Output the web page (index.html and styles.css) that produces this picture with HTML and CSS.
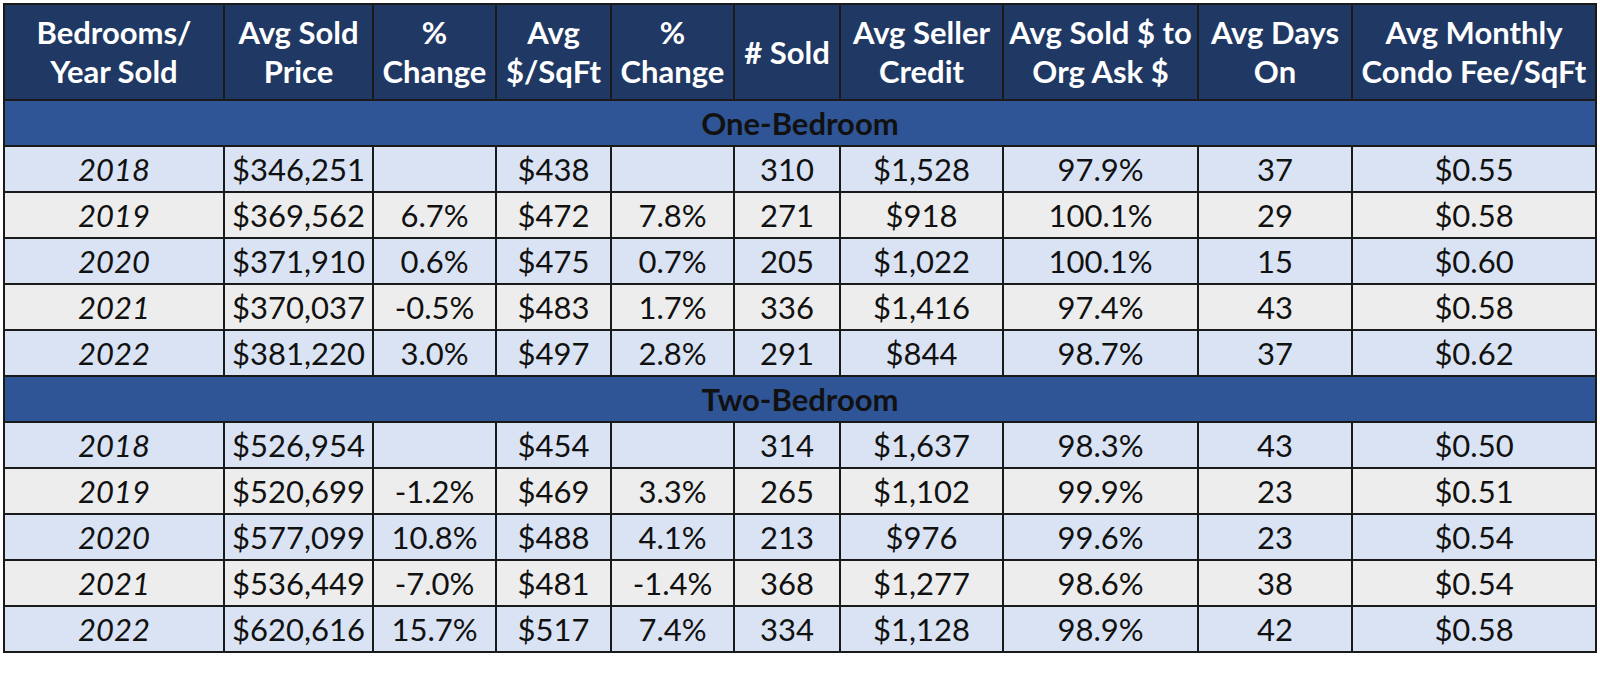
FILE: index.html
```html
<!DOCTYPE html>
<html>
<head>
<meta charset="utf-8">
<link rel="stylesheet" href="styles.css">
</head>
<body>
<table class="stats">
  <colgroup>
    <col class="c1"><col class="c2"><col class="c3"><col class="c4"><col class="c5">
    <col class="c6"><col class="c7"><col class="c8"><col class="c9"><col class="c10">
  </colgroup>
  <thead>
    <tr class="head">
      <th>Bedrooms/<br>Year Sold</th>
      <th>Avg Sold<br>Price</th>
      <th>%<br>Change</th>
      <th>Avg<br>$/SqFt</th>
      <th>%<br>Change</th>
      <th># Sold</th>
      <th>Avg Seller<br>Credit</th>
      <th>Avg Sold $ to<br>Org Ask $</th>
      <th>Avg Days<br>On</th>
      <th>Avg Monthly<br>Condo Fee/SqFt</th>
    </tr>
  </thead>
  <tbody>
    <tr class="section"><td colspan="10">One-Bedroom</td></tr>
    <tr class="blue"><td class="yr">2018</td><td>$346,251</td><td></td><td>$438</td><td></td><td>310</td><td>$1,528</td><td>97.9%</td><td>37</td><td>$0.55</td></tr>
    <tr class="gray"><td class="yr">2019</td><td>$369,562</td><td>6.7%</td><td>$472</td><td>7.8%</td><td>271</td><td>$918</td><td>100.1%</td><td>29</td><td>$0.58</td></tr>
    <tr class="blue"><td class="yr">2020</td><td>$371,910</td><td>0.6%</td><td>$475</td><td>0.7%</td><td>205</td><td>$1,022</td><td>100.1%</td><td>15</td><td>$0.60</td></tr>
    <tr class="gray"><td class="yr">2021</td><td>$370,037</td><td>-0.5%</td><td>$483</td><td>1.7%</td><td>336</td><td>$1,416</td><td>97.4%</td><td>43</td><td>$0.58</td></tr>
    <tr class="blue"><td class="yr">2022</td><td>$381,220</td><td>3.0%</td><td>$497</td><td>2.8%</td><td>291</td><td>$844</td><td>98.7%</td><td>37</td><td>$0.62</td></tr>
    <tr class="section"><td colspan="10">Two-Bedroom</td></tr>
    <tr class="blue"><td class="yr">2018</td><td>$526,954</td><td></td><td>$454</td><td></td><td>314</td><td>$1,637</td><td>98.3%</td><td>43</td><td>$0.50</td></tr>
    <tr class="gray"><td class="yr">2019</td><td>$520,699</td><td>-1.2%</td><td>$469</td><td>3.3%</td><td>265</td><td>$1,102</td><td>99.9%</td><td>23</td><td>$0.51</td></tr>
    <tr class="blue"><td class="yr">2020</td><td>$577,099</td><td>10.8%</td><td>$488</td><td>4.1%</td><td>213</td><td>$976</td><td>99.6%</td><td>23</td><td>$0.54</td></tr>
    <tr class="gray"><td class="yr">2021</td><td>$536,449</td><td>-7.0%</td><td>$481</td><td>-1.4%</td><td>368</td><td>$1,277</td><td>98.6%</td><td>38</td><td>$0.54</td></tr>
    <tr class="blue"><td class="yr">2022</td><td>$620,616</td><td>15.7%</td><td>$517</td><td>7.4%</td><td>334</td><td>$1,128</td><td>98.9%</td><td>42</td><td>$0.58</td></tr>
  </tbody>
</table>
</body>
</html>
```

FILE: styles.css
```css
html, body {
  margin: 0;
  padding: 0;
  background: #ffffff;
}

body {
  padding: 3px 0 0 3px;
  font-family: Lato, "Open Sans", "Liberation Sans", sans-serif;
}

.stats {
  border-collapse: collapse;
  table-layout: fixed;
  width: 1592px;
  border: 2px solid #1a1a1a;
}

.c1 { width: 220px; }
.c2 { width: 149px; }
.c3 { width: 123px; }
.c4 { width: 115px; }
.c5 { width: 123px; }
.c6 { width: 106px; }
.c7 { width: 163px; }
.c8 { width: 195px; }
.c9 { width: 154px; }
.c10 { width: 244px; }

.stats th,
.stats td {
  border: 2px solid #1a1a1a;
  padding: 0;
  text-align: center;
  vertical-align: middle;
  white-space: nowrap;
  overflow: hidden;
}

.head th {
  height: 94px;
  background: #203864;
  color: #ffffff;
  font-weight: 700;
  font-size: 31px;
  line-height: 39px;
}

.stats tbody td {
  height: 44px;
  font-size: 31px;
  line-height: 38px;
  color: #111111;
}

.section td {
  background: #2f5597;
  color: #ffffff;
  font-weight: 700;
}

.blue td {
  background: #dae3f3;
}

.gray td {
  background: #ededed;
}

.stats td.yr {
  font-style: italic;
}
```
